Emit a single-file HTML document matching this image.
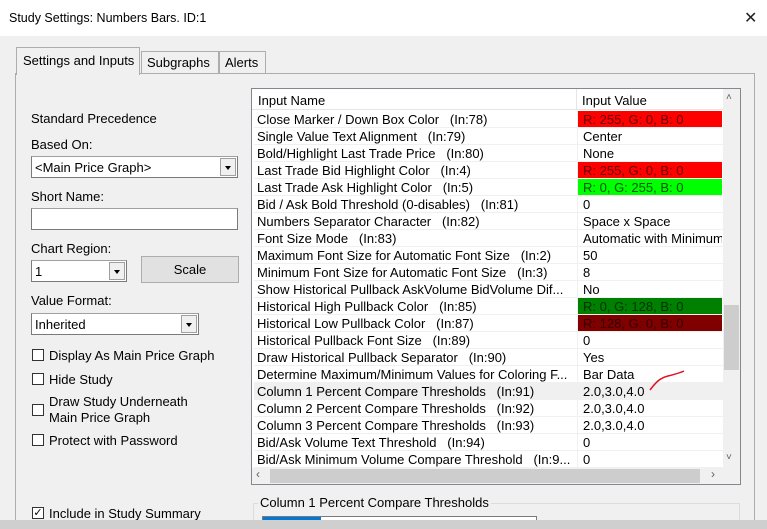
<!DOCTYPE html>
<html style="width:767px;height:529px;overflow:hidden"><head><style>
*{box-sizing:border-box;margin:0;padding:0}
body{width:767px;height:529px;background:#f0f0f0;font-family:"Liberation Sans",sans-serif;font-size:13px;color:#000;position:relative;overflow:hidden}
.a{position:absolute}
.title{left:0;top:0;width:767px;height:36px;background:#fff}
.lbl{white-space:nowrap}
.combo{background:#fff;border:1px solid #7a7a7a;border-top-color:#a0a0a0}
.arr{position:absolute;right:1px;top:1px;bottom:1px;width:16px;background:#f0f0f0;border:1px solid #a0a0a0}
.arr:after{content:"";position:absolute;left:4px;top:7px;border:3px solid transparent;border-top:4px solid #000;border-bottom:0}
.cb{width:12px;height:12px;border:1px solid #333;background:#fff}
.row{position:absolute;left:254px;width:469px;height:17px;border-bottom:1px solid #f0f0f0;background:#fff;font-size:13px;line-height:17px}
.row .n{position:absolute;left:3px;white-space:nowrap;width:318px;overflow:hidden}
.row .v{position:absolute;left:323px;top:0;width:145px;height:16px;padding-left:5px;white-space:nowrap;overflow:hidden;border-left:1px solid #f0f0f0}
</style></head><body>
<div class="a title"></div>
<div class="a lbl" style="left:9px;top:11px;font-size:12.5px">Study Settings: Numbers Bars. ID:1</div>
<div class="a" style="left:744px;top:8px;font-size:16px;font-weight:300;color:#222">✕</div>
<!-- tabs -->
<div class="a" style="left:15px;top:73px;width:740px;height:460px;border:1px solid #adadad;border-bottom:none;background:#f0f0f0"></div>
<div class="a" style="left:16px;top:47px;width:124px;height:28px;border:1px solid #adadad;border-bottom:none;background:#f0f0f0"></div>
<div class="a lbl" style="left:23px;top:53px">Settings and Inputs</div>
<div class="a" style="left:141px;top:51px;width:78px;height:22px;border:1px solid #adadad;border-bottom:none"></div>
<div class="a lbl" style="left:147px;top:55px">Subgraphs</div>
<div class="a" style="left:219px;top:51px;width:47px;height:22px;border:1px solid #adadad;border-bottom:none"></div>
<div class="a lbl" style="left:225px;top:55px">Alerts</div>
<!-- left -->
<div class="a lbl" style="left:31px;top:111px">Standard Precedence</div>
<div class="a lbl" style="left:31px;top:137px">Based On:</div>
<div class="a combo" style="left:31px;top:156px;width:207px;height:22px"><span class="a" style="left:3px;top:3px">&lt;Main Price Graph&gt;</span><div class="arr"></div></div>
<div class="a lbl" style="left:31px;top:189px">Short Name:</div>
<div class="a combo" style="left:31px;top:208px;width:207px;height:22px"></div>
<div class="a lbl" style="left:31px;top:241px">Chart Region:</div>
<div class="a combo" style="left:31px;top:260px;width:96px;height:22px"><span class="a" style="left:3px;top:3px">1</span><div class="arr"></div></div>
<div class="a" style="left:141px;top:256px;width:98px;height:27px;background:#e1e1e1;border:1px solid #adadad;text-align:center;line-height:25px">Scale</div>
<div class="a lbl" style="left:31px;top:293px">Value Format:</div>
<div class="a combo" style="left:31px;top:313px;width:168px;height:22px"><span class="a" style="left:3px;top:3px">Inherited</span><div class="arr"></div></div>
<div class="a cb" style="left:32px;top:349px"></div><div class="a lbl" style="left:49px;top:348px">Display As Main Price Graph</div>
<div class="a cb" style="left:32px;top:373px"></div><div class="a lbl" style="left:49px;top:372px">Hide Study</div>
<div class="a cb" style="left:32px;top:404px"></div><div class="a lbl" style="left:49px;top:394px;line-height:16px">Draw Study Underneath<br>Main Price Graph</div>
<div class="a cb" style="left:32px;top:434px"></div><div class="a lbl" style="left:49px;top:433px">Protect with Password</div>
<div class="a cb" style="left:32px;top:507px;font-size:11px;line-height:10px;text-align:center">✓</div><div class="a lbl" style="left:49px;top:506px">Include in Study Summary</div>
<!-- grid -->
<div class="a" style="left:251px;top:88px;width:490px;height:397px;border:1px solid #828790;background:#fff"></div>
<div class="a" style="left:252px;top:89px;width:471px;height:21px;background:#fff;border-bottom:1px solid #e5e5e5"></div>
<div class="a lbl" style="left:258px;top:93px">Input Name</div>
<div class="a" style="left:576px;top:89px;width:1px;height:21px;background:#e5e5e5"></div>
<div class="a lbl" style="left:582px;top:93px">Input Value</div>
<div class="a" style="left:723px;top:89px;width:17px;height:379px;background:#f0f0f0"></div>
<div class="a" style="left:726px;top:92px;font-size:10px;color:#606060">˄</div>
<div class="a" style="left:724px;top:305px;width:15px;height:65px;background:#cdcdcd"></div>
<div class="a" style="left:726px;top:452px;font-size:10px;color:#606060">˅</div>
<div class="a" style="left:252px;top:468px;width:488px;height:16px;background:#f0f0f0"></div>
<div class="a" style="left:270px;top:469px;width:430px;height:14px;background:#cdcdcd"></div>
<div class="a" style="left:256px;top:467px;font-size:12px;color:#606060">‹</div>
<div class="a" style="left:711px;top:467px;font-size:12px;color:#606060">›</div>

<div class="row" style="top:111px"><span class="n">Close Marker / Down Box Color&nbsp;&nbsp; (In:78)</span><span class="v" style="background:#f00;color:#600">R: 255, G: 0, B: 0</span></div>
<div class="row" style="top:128px"><span class="n">Single Value Text Alignment&nbsp;&nbsp; (In:79)</span><span class="v">Center</span></div>
<div class="row" style="top:145px"><span class="n">Bold/Highlight Last Trade Price&nbsp;&nbsp; (In:80)</span><span class="v">None</span></div>
<div class="row" style="top:162px"><span class="n">Last Trade Bid Highlight Color&nbsp;&nbsp; (In:4)</span><span class="v" style="background:#f00;color:#600">R: 255, G: 0, B: 0</span></div>
<div class="row" style="top:179px"><span class="n">Last Trade Ask Highlight Color&nbsp;&nbsp; (In:5)</span><span class="v" style="background:#0f0;color:#050">R: 0, G: 255, B: 0</span></div>
<div class="row" style="top:196px"><span class="n">Bid / Ask Bold Threshold (0-disables)&nbsp;&nbsp; (In:81)</span><span class="v">0</span></div>
<div class="row" style="top:213px"><span class="n">Numbers Separator Character&nbsp;&nbsp; (In:82)</span><span class="v">Space x Space</span></div>
<div class="row" style="top:230px"><span class="n">Font Size Mode&nbsp;&nbsp; (In:83)</span><span class="v">Automatic with Minimum</span></div>
<div class="row" style="top:247px"><span class="n">Maximum Font Size for Automatic Font Size&nbsp;&nbsp; (In:2)</span><span class="v">50</span></div>
<div class="row" style="top:264px"><span class="n">Minimum Font Size for Automatic Font Size&nbsp;&nbsp; (In:3)</span><span class="v">8</span></div>
<div class="row" style="top:281px"><span class="n">Show Historical Pullback AskVolume BidVolume Dif...</span><span class="v">No</span></div>
<div class="row" style="top:298px"><span class="n">Historical High Pullback Color&nbsp;&nbsp; (In:85)</span><span class="v" style="background:#008000;color:#030">R: 0, G: 128, B: 0</span></div>
<div class="row" style="top:315px"><span class="n">Historical Low Pullback Color&nbsp;&nbsp; (In:87)</span><span class="v" style="background:#800000;color:#300">R: 128, G: 0, B: 0</span></div>
<div class="row" style="top:332px"><span class="n">Historical Pullback Font Size&nbsp;&nbsp; (In:89)</span><span class="v">0</span></div>
<div class="row" style="top:349px"><span class="n">Draw Historical Pullback Separator&nbsp;&nbsp; (In:90)</span><span class="v">Yes</span></div>
<div class="row" style="top:366px"><span class="n">Determine Maximum/Minimum Values for Coloring F...</span><span class="v">Bar Data</span></div>
<div class="row" style="top:383px;background:#f0f0f0"><span class="n">Column 1 Percent Compare Thresholds&nbsp;&nbsp; (In:91)</span><span class="v">2.0,3.0,4.0</span></div>
<div class="row" style="top:400px"><span class="n">Column 2 Percent Compare Thresholds&nbsp;&nbsp; (In:92)</span><span class="v">2.0,3.0,4.0</span></div>
<div class="row" style="top:417px"><span class="n">Column 3 Percent Compare Thresholds&nbsp;&nbsp; (In:93)</span><span class="v">2.0,3.0,4.0</span></div>
<div class="row" style="top:434px"><span class="n">Bid/Ask Volume Text Threshold&nbsp;&nbsp; (In:94)</span><span class="v">0</span></div>
<div class="row" style="top:451px"><span class="n">Bid/Ask Minimum Volume Compare Threshold&nbsp;&nbsp; (In:9...</span><span class="v">0</span></div>
<svg class="a" style="left:648px;top:368px" width="40" height="24"><path d="M2 22 C8 14 12 10 20 8 S32 5 36 3" stroke="#e01020" stroke-width="1.5" fill="none"/></svg>
<!-- group box -->
<div class="a" style="left:253px;top:503px;width:487px;height:40px;border:1px solid #dcdcdc"></div>
<div class="a lbl" style="left:258px;top:495px;background:#f0f0f0;padding:0 2px">Column 1 Percent Compare Thresholds</div>
<div class="a" style="left:262px;top:516px;width:275px;height:10px;border:1px solid #7a7a7a;background:#fff"></div>
<div class="a" style="left:263px;top:517px;width:58px;height:3px;background:#0078d7"></div>
<div class="a" style="left:0;top:520px;width:767px;height:9px;background:#cfcfcf"></div>
</body></html>
